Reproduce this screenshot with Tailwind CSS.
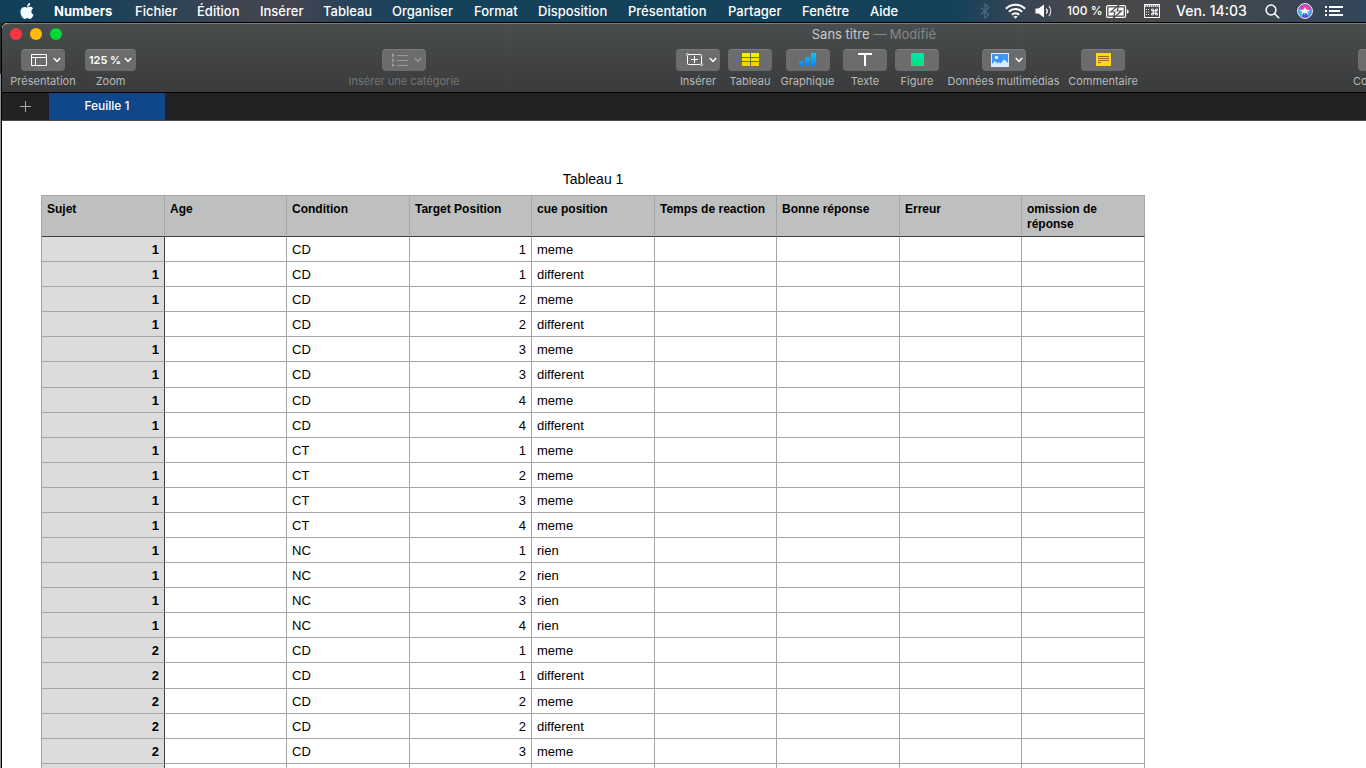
<!DOCTYPE html>
<html lang="fr">
<head>
<meta charset="utf-8">
<title>Sans titre</title>
<script src="https://cdn.jsdelivr.net/npm/@tailwindcss/browser@4"></script>
</head>
<body class="h-screen overflow-hidden bg-black font-['Inter','Liberation_Sans',sans-serif] flex flex-col">

<!-- Menu bar -->
<header class="h-[22px] shrink-0 flex items-center pl-[19px] pr-[23px] text-white text-[14px] leading-[22px] font-medium whitespace-nowrap bg-[linear-gradient(90deg,#113f59_0%,#17405a_7%,#3c4453_16%,#45454f_21%,#24425b_26%,#14425b_32%,#14425b_70%,#3a4553_75%,#484849_80%,#45484c_88%,#30465a_100%)]">
  <svg class="w-4 h-4 mr-[19px]" viewBox="0 0 24 24" fill="#f2fbff" aria-label="Apple"><path d="M12.152 6.896c-.948 0-2.415-1.078-3.96-1.04-2.04.027-3.91 1.183-4.961 3.014-2.117 3.675-.546 9.103 1.519 12.09 1.013 1.454 2.208 3.09 3.792 3.039 1.52-.065 2.09-.987 3.935-.987 1.831 0 2.35.987 3.96.948 1.637-.026 2.676-1.48 3.676-2.948 1.156-1.688 1.636-3.325 1.662-3.415-.039-.013-3.182-1.221-3.22-4.857-.026-3.04 2.48-4.494 2.597-4.559-1.429-2.09-3.623-2.324-4.39-2.376-2-.156-3.675 1.09-4.61 1.09zM15.53 3.83c.843-1.012 1.4-2.427 1.245-3.83-1.207.052-2.662.805-3.532 1.818-.78.896-1.454 2.338-1.273 3.714 1.338.104 2.715-.688 3.559-1.701"/></svg>
  <nav class="flex text-left" aria-label="Menus">
    <button class="w-[81px] text-left text-[13px] font-bold">Numbers</button>
    <button class="w-[62px] text-left text-[13px]">Fichier</button>
    <button class="w-[63px] text-left text-[13px]">Édition</button>
    <button class="w-[63px] text-left text-[13px]">Insérer</button>
    <button class="w-[69px] text-left text-[13px]">Tableau</button>
    <button class="w-[82px] text-left text-[13px]">Organiser</button>
    <button class="w-16 text-left text-[13px]">Format</button>
    <button class="w-[90px] text-left text-[13px]">Disposition</button>
    <button class="w-[100px] text-left text-[13px]">Présentation</button>
    <button class="w-[74px] text-left text-[13px]">Partager</button>
    <button class="w-[68px] text-left text-[13px]">Fenêtre</button>
    <button class="text-left text-[13px]">Aide</button>
  </nav>
  <div class="ml-auto flex items-center">
    <svg class="w-[10px] h-4" viewBox="0 0 10 16" fill="none" stroke="#4a6b80" stroke-width="1.2"><path d="M.8 4.500l8 7L5 15V1l3.800 3.500-8 7"/></svg>
    <svg class="w-[21px] h-4 ml-[15px]" viewBox="0 0 21 16" fill="none" stroke="#fff" stroke-width="2"><path d="M.9 5.700a13.500 13.500 0 0 1 19.200 0M3.900 8.800a9.300 9.300 0 0 1 13.200 0M6.900 11.800a5.200 5.200 0 0 1 7.200 0"/><path d="M10.500 15.700l-2-2.100a2.900 2.900 0 0 1 4 0z" fill="#fff" stroke="none"/></svg>
    <svg class="w-[18px] h-4 ml-[9px]" viewBox="0 0 18 16" fill="none" stroke="#fff" stroke-width="1.200"><path d="M.5 5.500h3L9 1.500v13l-5.500-4h-3z" fill="#fff" stroke="none"/><path d="M11.300 5.500a4 4 0 0 1 0 5"/><path d="M14 3a8 8 0 0 1 0 10" stroke="#dfe3e5"/></svg>
    <span class="w-[39px] ml-[14px] text-[12px]">100 %</span>
    <svg class="w-[23px] h-[13px]" viewBox="0 0 23 13" fill="none"><rect x=".6" y=".6" width="19" height="11.800" rx="1.500" stroke="#fff" stroke-width="1.200"/><path d="M21 4.500v4c1.300-.4 1.700-1.200 1.700-2s-.4-1.600-1.700-2z" fill="#fff"/><path d="M2.500 2.500h15.200v8H2.500z" fill="#fff"/><path d="M12.800 0L4.800 7h4.200L7.400 13l8-7h-4.200z" fill="#fff" stroke="#484849" stroke-width="1.200"/></svg>
    <svg class="w-4 h-[14px] ml-[15px]" viewBox="0 0 16 14" fill="none" stroke="#fff"><rect x=".5" y=".5" width="15" height="13"/><path d="M1 2h14" stroke-width="1.600" stroke-dasharray="1.500 .5"/><path d="M2 5.500h3M2 8h3M2 10.500h3" stroke-dasharray="1 1"/><path d="M8 6.800h5M8 9.200h5M9.300 5.500v5M11.700 5.500v5" stroke-width=".9"/><path d="M9.300 6.800H7.500V5h1.800zM11.700 6.800h1.800V5h-1.800zM9.300 9.200H7.500V11h1.800zM11.700 9.200h1.800V11h-1.800z" stroke-width=".8"/></svg>
    <time class="w-[69px] ml-4">Ven. 14:03</time>
    <svg class="w-[15px] h-[15px] ml-5" viewBox="0 0 15 15" fill="none" stroke="#fff" stroke-width="1.500"><circle cx="6" cy="6" r="4.900"/><path d="M9.600 9.600l4.600 4.600"/></svg>
    <svg class="w-4 h-4 ml-[17px]" viewBox="0 0 16 16"><circle cx="8" cy="8" r="7.300" fill="#4a4fc8"/><path d="M2 6a6.400 6.400 0 0 1 12 0L8 8z" fill="#f03aa8"/><path d="M2 10.500a6.400 6.400 0 0 1 0-5L8 7.500l-3 6.300a6 6 0 0 1-3-3.300z" fill="#36c3f0"/><path d="M14.200 6c.8 3-.3 6-3.200 7.800L8 7.500z" fill="#5f9df0"/><path d="M8 3.800l1.300 2.700 3.700.8-2.700 1.200.9 3.300L8.400 9.400 8 13 7.300 9.400 4.300 11.500l1.200-3L3 7.300l3.800-.8z" fill="#fff"/><circle cx="8" cy="8" r="7.400" fill="none" stroke="#fff"/></svg>
    <svg class="w-[18px] h-3 ml-3" viewBox="0 0 18 12" fill="#fff"><path d="M0 1h2v2H0zM0 5h2v2H0zM0 9h2v2H0zM4 1h14v2H4zM4 5h11v2H4zM4 9h14v2H4z"/></svg>
  </div>
</header>

<!-- Window, over a sliver of desktop -->
<div class="flex-1 min-h-0 flex bg-[linear-gradient(180deg,#2a2c2b_0_52px,#8b9097_52px)] pl-px">
<main class="flex-1 min-w-0 flex flex-col overflow-hidden border-l border-t border-black bg-white rounded-tl-md">

  <div class="shrink-0 h-[70px] overflow-hidden border-t border-[#7c7e7b] border-b border-b-black bg-linear-to-b from-[#4a4d4d] to-[#3a3b3c] rounded-tl-md">
    <div class="h-5 flex items-center text-[13px] leading-4">
      <div class="flex gap-2 pl-2 flex-1">
        <button aria-label="Fermer" class="size-3 rounded-full bg-[#fc3441]"></button>
        <button aria-label="Réduire" class="size-3 rounded-full bg-[#fdbc07]"></button>
        <button aria-label="Agrandir" class="size-3 rounded-full bg-[#04d936]"></button>
      </div>
      <h1 class="text-[#c9caca] whitespace-nowrap">Sans titre <span class="text-[#858787]">— Modifié</span></h1>
      <div class="w-[430px]"></div>
    </div>

    <div class="pt-[5px] pl-[7px] w-[calc(100%+41px)] flex gap-2 text-[11px] leading-4 text-[#b9bbbb] whitespace-nowrap [&>button]:shrink-0 [&>button]:flex [&>button]:flex-col [&>button]:items-center [&>button]:gap-[2px] [&>button>span:first-child]:h-[22px] [&>button>span:first-child]:pb-[2px] [&>button>span:first-child]:rounded [&>button>span:first-child]:bg-[#6a6c6d] [&>button>span:first-child]:border-t [&>button>span:first-child]:border-[#7a7c7c] [&>button>span:first-child]:flex [&>button>span:first-child]:items-center [&>button>span:first-child]:justify-center">
      <button class="w-[68px]"><span class="w-11 gap-[6px] pl-[6px]">
        <svg class="w-4 h-3" viewBox="0 0 16 12" fill="none" stroke="#fff"><path d="M.5 .5h15v11H.5zM.5 3.500h15M4.500 3.500v8"/></svg>
        <svg class="w-2 h-[6px]" viewBox="0 0 8 6" fill="none" stroke="#fff" stroke-width="1.500"><path d="M.8 1L4 4.400 7.200 1"/></svg></span><span>Présentation</span></button>
      <button class="w-[51px]"><span class="w-full gap-[3px] text-white font-semibold text-[11px]">125 %
        <svg class="w-2 h-[6px]" viewBox="0 0 8 6" fill="none" stroke="#fff" stroke-width="1.500"><path d="M.8 1L4 4.400 7.200 1"/></svg></span><span>Zoom</span></button>
      <div class="basis-0 grow-[196]"></div>
      <button disabled class="w-28 text-[#747676]"><span class="w-11 gap-[6px] pl-[6px]">
        <svg class="w-4 h-[14px]" viewBox="0 0 16 14" fill="none" stroke="#999b9b"><path d="M5 2.500h11M5 7.500h11M5 12.500h11"/><path d="M0 0l3 2.300L0 4.500zM0 5l3 2.300L0 9.500zM0 10l3 2.200-3 1.800z" fill="#999b9b" stroke="none"/></svg>
        <svg class="w-2 h-[6px]" viewBox="0 0 8 6" fill="none" stroke="#999b9b" stroke-width="1.500"><path d="M.8 1L4 4.400 7.200 1"/></svg></span><span>Insérer une catégorie</span></button>
      <div class="basis-0 grow-[200]"></div>
      <button class="w-11"><span class="w-11 gap-[6px] pl-[6px]">
        <svg class="w-[17px] h-[13px]" viewBox="0 0 17 13" fill="none" stroke="#fff"><path d="M3 1.500h11.500q1 0 1 1V10M14 11.500H2.500q-1 0-1-1V3M8.500 3v7M5 6.500h7"/><circle cx="1.500" cy="1.500" r="1"/><circle cx="15.500" cy="11.500" r="1"/></svg>
        <svg class="w-2 h-[6px]" viewBox="0 0 8 6" fill="none" stroke="#fff" stroke-width="1.500"><path d="M.8 1L4 4.400 7.200 1"/></svg></span><span>Insérer</span></button>
      <button class="w-11"><span class="w-11">
        <svg class="w-[17px] h-[13px]" viewBox="0 0 17 13"><path d="M0 0h8v4H0zM9 0h8v4H9z" fill="#ffee00"/><path d="M0 5h8v3H0zM9 5h8v3H9z" fill="#ffe000"/><path d="M0 9h8v4H0zM9 9h8v4H9z" fill="#ffd000"/></svg></span><span>Tableau</span></button>
      <button class="w-[55px]"><span class="w-11">
        <svg class="w-[17px] h-[13px]" viewBox="0 0 17 13"><defs><linearGradient id="bars" x1="0" y1="0" x2="0" y2="13" gradientUnits="userSpaceOnUse"><stop stop-color="#00c8fa"/><stop offset="1" stop-color="#0a84ff"/></linearGradient></defs><path d="M0 8h5v5H0zM6 4h5v9H6zM12 0h5v13h-5z" fill="url(#bars)"/></svg></span><span>Graphique</span></button>
      <button class="w-11"><span class="w-11">
        <svg class="w-[14px] h-[13px]" viewBox="0 0 14 13" fill="none" stroke="#fff" stroke-width="2"><path d="M0 1h14M7 1v12"/></svg></span><span>Texte</span></button>
      <button class="w-11"><span class="w-11"><i class="block size-[13px] border border-[#10e08c] bg-linear-to-b from-[#00e5b8] to-[#08e070]"></i></span><span>Figure</span></button>
      <button class="w-[113px]"><span class="w-11 gap-[6px] pl-[6px]">
        <svg class="w-[18px] h-[14px]" viewBox="0 0 18 14"><path d="M0 0h18v14H0z" fill="#d9ecff"/><path d="M1 1h16v9l-1.500-1.500-2.500-2-3.500 4-1.500-1.500-1.500 1.500L4 8l-3 3z" fill="#3d97fb"/><circle cx="5.500" cy="4.500" r="1.700" fill="#e5f2ff"/></svg>
        <svg class="w-2 h-[6px]" viewBox="0 0 8 6" fill="none" stroke="#fff" stroke-width="1.500"><path d="M.8 1L4 4.400 7.200 1"/></svg></span><span>Données multimédias</span></button>
      <button class="w-[70px]"><span class="w-11">
        <svg class="w-[15px] h-[13px]" viewBox="0 0 15 13"><path d="M0 0h15v13H0z" fill="#ffdc00"/><path d="M2 3.500h11M2 5.500h11M2 7.500h11M2 9.500h3" stroke="#9a6a1c"/></svg></span><span>Commentaire</span></button>
      <div class="basis-0 grow-[199]"></div>
      <button class="w-[54px]"><span class="w-11"></span><span>Collaborer</span></button>
    </div>
  </div>

  <div class="shrink-0 h-7 flex bg-[#222] border-b border-[#4a4a4a]">
    <button aria-label="Ajouter une feuille" class="w-[47px] flex items-center justify-center">
      <svg class="size-[11px]" viewBox="0 0 11 11" stroke="#a8a8a8"><path d="M5.500 0v11M0 5.500h11"/></svg></button>
    <button class="w-[116px] bg-[#10468a] text-white text-[12px] leading-4 font-medium pb-px">Feuille 1</button>
  </div>

  <section class="flex-1 min-h-0 overflow-hidden pl-[39px] pt-[49px] font-['Liberation_Sans',Arial,sans-serif] text-black">
    <table class="table-fixed w-[1104px] border-separate border-spacing-0 border-l border-[#a5a5a5] text-[13px] leading-[15px]
      [&_td]:border-r [&_td]:border-b [&_td]:border-[#a5a5a5] [&_td]:px-[5px] [&_td]:py-0
      [&_tbody_th]:border-r [&_tbody_th]:border-b [&_tbody_th]:border-b-[#a5a5a5] [&_tbody_th]:border-r-[#3f3f3f] [&_tbody_th]:bg-[#dcdcdc] [&_tbody_th]:px-[5px] [&_tbody_th]:py-0 [&_tbody_th]:text-right
      [&_thead_th]:border-r [&_thead_th]:border-y [&_thead_th]:border-[#a5a5a5] [&_thead_th]:border-b-[#3f3f3f] [&_thead_th]:bg-[#bec0bf] [&_thead_th]:pl-[5px] [&_thead_th]:pr-0 [&_thead_th]:pt-[6px] [&_thead_th]:pb-0 [&_thead_th]:text-left [&_thead_th]:align-top [&_thead_th]:text-[12px]">
      <caption class="text-[14px] leading-[18px] pb-[7px]">Tableau 1</caption>
      <colgroup>
        <col class="w-[123px]"><col class="w-[122px]"><col class="w-[123px]"><col class="w-[122px]"><col class="w-[123px]"><col class="w-[122px]"><col class="w-[123px]"><col class="w-[122px]"><col class="w-[123px]">
      </colgroup>
      <thead>
        <tr class="h-[42px]"><th scope="col">Sujet</th><th scope="col">Age</th><th scope="col">Condition</th><th scope="col">Target Position</th><th scope="col">cue position</th><th scope="col">Temps de reaction</th><th scope="col">Bonne réponse</th><th scope="col">Erreur</th><th scope="col">omission de réponse</th></tr>
      </thead>
      <tbody id="rows"></tbody>
    </table>
  </section>
</main>
</div>

<script>
  const block = [
    ['CD', 1, 'meme'], ['CD', 1, 'different'], ['CD', 2, 'meme'], ['CD', 2, 'different'],
    ['CD', 3, 'meme'], ['CD', 3, 'different'], ['CD', 4, 'meme'], ['CD', 4, 'different'],
    ['CT', 1, 'meme'], ['CT', 2, 'meme'], ['CT', 3, 'meme'], ['CT', 4, 'meme'],
    ['NC', 1, 'rien'], ['NC', 2, 'rien'], ['NC', 3, 'rien'], ['NC', 4, 'rien']
  ];
  const trials = [1, 2].flatMap(subject => block.map(trial => [subject, ...trial])).slice(0, 21);
  trials.push(['', '', '', '']);
  // Every twelfth row is a pixel taller.
  document.getElementById('rows').innerHTML = trials.map(([subject, condition, target, cue], i) =>
    `<tr class="${i % 12 === 5 ? 'h-[26px]' : 'h-[25px]'}"><th scope="row">${subject}</th><td></td><td>${condition}</td><td class="text-right">${target}</td><td>${cue}</td><td></td><td></td><td></td><td></td></tr>`
  ).join('');
</script>
</body>
</html>
